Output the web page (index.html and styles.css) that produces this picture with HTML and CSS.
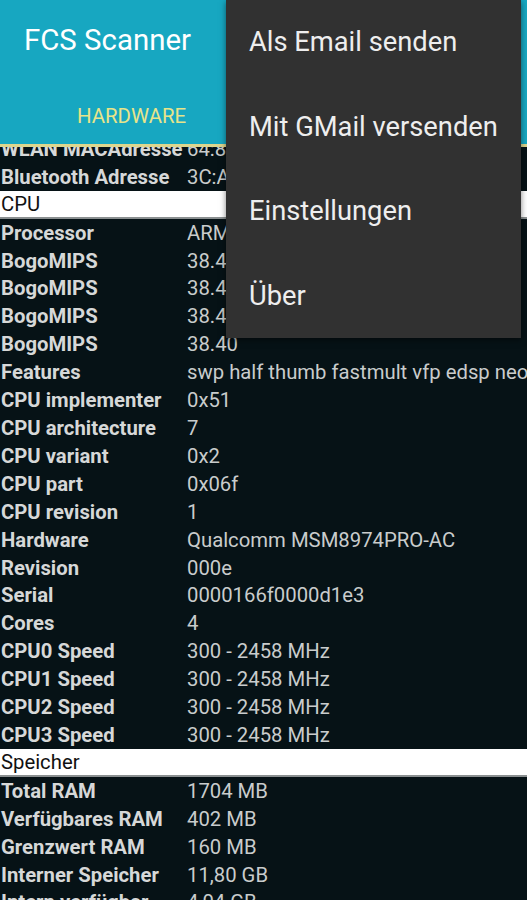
FILE: index.html
```html
<!DOCTYPE html>
<html lang="de">
<head>
<meta charset="utf-8">
<link rel="stylesheet" href="styles.css">
</head>
<body>
<div class="screen">
  <header class="appbar">
    <div class="title">FCS Scanner</div>
    <div class="tabs">
      <div class="tab active">HARDWARE</div>
    </div>
  </header>
  <div class="list">
    <div class="scroll">
      <div class="row"><span class="k">WLAN MACAdresse</span><span class="v">64:89:9A:F1:2C:0B</span></div>
      <div class="row"><span class="k">Bluetooth Adresse</span><span class="v">3C:A1:0D:7E:44:19</span></div>
      <div class="section">CPU</div>
      <div class="row"><span class="k">Processor</span><span class="v">ARMv7 Processor rev 1 (v7l)</span></div>
      <div class="row"><span class="k">BogoMIPS</span><span class="v">38.40</span></div>
      <div class="row"><span class="k">BogoMIPS</span><span class="v">38.40</span></div>
      <div class="row"><span class="k">BogoMIPS</span><span class="v">38.40</span></div>
      <div class="row"><span class="k">BogoMIPS</span><span class="v">38.40</span></div>
      <div class="row"><span class="k">Features</span><span class="v">swp half thumb fastmult vfp edsp neon vfpv3</span></div>
      <div class="row"><span class="k">CPU implementer</span><span class="v">0x51</span></div>
      <div class="row"><span class="k">CPU architecture</span><span class="v">7</span></div>
      <div class="row"><span class="k">CPU variant</span><span class="v">0x2</span></div>
      <div class="row"><span class="k">CPU part</span><span class="v">0x06f</span></div>
      <div class="row"><span class="k">CPU revision</span><span class="v">1</span></div>
      <div class="row"><span class="k">Hardware</span><span class="v">Qualcomm MSM8974PRO-AC</span></div>
      <div class="row"><span class="k">Revision</span><span class="v">000e</span></div>
      <div class="row"><span class="k">Serial</span><span class="v">0000166f0000d1e3</span></div>
      <div class="row"><span class="k">Cores</span><span class="v">4</span></div>
      <div class="row"><span class="k">CPU0 Speed</span><span class="v">300 - 2458 MHz</span></div>
      <div class="row"><span class="k">CPU1 Speed</span><span class="v">300 - 2458 MHz</span></div>
      <div class="row"><span class="k">CPU2 Speed</span><span class="v">300 - 2458 MHz</span></div>
      <div class="row"><span class="k">CPU3 Speed</span><span class="v">300 - 2458 MHz</span></div>
      <div class="section">Speicher</div>
      <div class="row"><span class="k">Total RAM</span><span class="v">1704 MB</span></div>
      <div class="row"><span class="k">Verfügbares RAM</span><span class="v">402 MB</span></div>
      <div class="row"><span class="k">Grenzwert RAM</span><span class="v">160 MB</span></div>
      <div class="row"><span class="k">Interner Speicher</span><span class="v">11,80 GB</span></div>
      <div class="row"><span class="k">Intern verfügbar</span><span class="v">4,04 GB</span></div>
    </div>
  </div>
  <div class="menu">
    <div class="item">Als Email senden</div>
    <div class="item">Mit GMail versenden</div>
    <div class="item">Einstellungen</div>
    <div class="item">Über</div>
  </div>
</div>
</body>
</html>
```
FILE: styles.css
```css
* { box-sizing: border-box; }
html, body { margin: 0; padding: 0; }
body {
  background: #061216;
  font-family: Roboto, "Noto Sans", sans-serif;
  width: 527px;
  height: 900px;
  overflow: hidden;
}
.screen {
  position: relative;
  width: 527px;
  height: 900px;
  display: flex;
  flex-direction: column;
  overflow: hidden;
}
.appbar {
  background: #17a7c1;
  height: 147px;
  flex: none;
  display: flex;
  flex-direction: column;
  position: relative;
  z-index: 2;
  border-bottom: 3px solid #ddd68e;
}
.title {
  color: #ffffff;
  font-size: 29.4px;
  padding: 22px 0 0 24px;
  height: 102px;
  line-height: 36px;
}
.tabs {
  display: flex;
  padding-left: 77px;
}
.tab {
  color: #e8e48a;
  font-size: 20.4px;
  line-height: 28px;
}
.list {
  flex: 1;
  overflow: hidden;
}
.scroll {
  margin-top: -12px;
}
.row {
  display: flex;
  height: 27.92px;
  align-items: center;
  white-space: nowrap;
  color: #d6d8d8;
  font-size: 20.3px;
}
.k {
  width: 187px;
  flex: none;
  padding-left: 1px;
  font-weight: bold;
  overflow: hidden;
}
.v {
  color: #c9cccc;
}
.section {
  height: 27.92px;
  background: #ffffff;
  color: #111;
  font-size: 20.3px;
  display: flex;
  align-items: center;
  padding-left: 1px;
  border-bottom: 2px solid #8a8f90;
}
.menu {
  position: absolute;
  top: 0;
  left: 226px;
  width: 295px;
  height: 338px;
  background: #313131;
  z-index: 5;
  box-shadow: 0 2px 6px rgba(0,0,0,0.5);
  display: flex;
  flex-direction: column;
}
.item {
  height: 85px;
  display: flex;
  align-items: center;
  padding-left: 23px;
  color: #eeeeee;
  font-size: 27.3px;
}
```
